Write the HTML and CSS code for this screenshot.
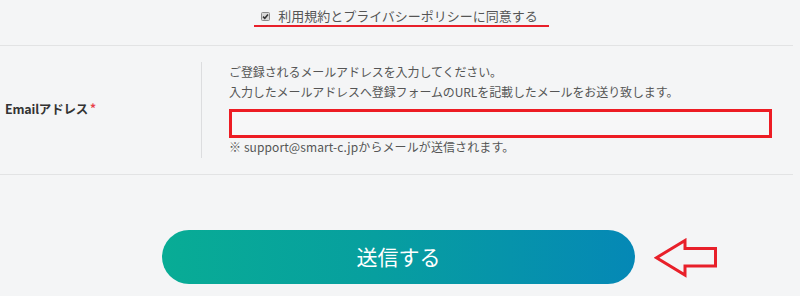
FILE: index.html
```html
<!DOCTYPE html>
<html lang="ja">
<head>
<meta charset="utf-8">
<title>Email登録</title>
<link rel="stylesheet" href="styles.css">
</head>
<body>
<div class="page">
  <div class="agree">
    <label class="agree-label">
      <span class="check"><svg width="9" height="9" viewBox="0 0 9 9"><rect x="0.5" y="0.5" width="8" height="8" rx="1" fill="#d9d9d9" stroke="#8a8a8a"/><path d="M2 4.6 L3.8 6.3 L7 2.6" fill="none" stroke="#333" stroke-width="1.5"/></svg></span>
      <span class="agree-text">利用規約とプライバシーポリシーに同意する</span>
    </label>
  </div>
  <div class="row">
    <div class="row-label">Emailアドレス<span class="req">*</span></div>
    <div class="row-body">
      <p class="desc">ご登録されるメールアドレスを入力してください。<br>入力したメールアドレスへ登録フォームのURLを記載したメールをお送り致します。</p>
      <div class="input"></div>
      <p class="note">※ support@smart-c.jpからメールが送信されます。</p>
    </div>
  </div>
  <div class="actions">
    <button class="submit" type="button">送信する</button>
    <svg class="arrow" width="64" height="40" viewBox="0 0 64 40"><path d="M2.5 19.7 L31 2.5 L31 10.5 L61.5 10.5 L61.5 28 L31 28 L31 37 Z" fill="none" stroke="#e8202a" stroke-width="3" stroke-linejoin="miter"/></svg>
  </div>
</div>
</body>
</html>
```

FILE: styles.css
```css
html, body {
  margin: 0;
  padding: 0;
}
body {
  background: #f4f5f6;
  font-family: "Noto Sans CJK JP", "Open Sans", sans-serif;
  color: #555;
  width: 800px;
  height: 296px;
  overflow: hidden;
}
.page {
  width: 793px;
}
.agree {
  height: 45px;
  box-sizing: border-box;
  padding-top: 7px;
  display: flex;
  justify-content: center;
  padding-left: 10px;
}
.agree-label {
  display: inline-flex;
  align-items: center;
  border-bottom: 2px solid #e8202a;
  padding: 0 11px 0 7px;
  height: 18px;
  font-size: 13px;
  line-height: 18px;
  color: #555;
}
.check {
  display: flex;
  width: 9px;
  height: 9px;
  margin-right: 8px;
}
.row {
  display: grid;
  grid-template-columns: 201px 1fr;
  border-top: 1px solid #e2e3e4;
  border-bottom: 1px solid #e2e3e4;
  padding: 16px 0;
}
.row-label {
  display: flex;
  align-items: center;
  padding-left: 5px;
  padding-bottom: 4px;
  font-size: 12.5px;
  font-weight: bold;
  color: #333;
  letter-spacing: -0.2px;
}
.req {
  color: #e8404a;
  margin-left: 2px;
  font-size: 12px;
  align-self: flex-start;
  margin-top: 37px;
}
.row-body {
  border-left: 1px solid #dcdddf;
  padding: 0 0 3px 27px;
}
.desc {
  margin: 0;
  font-size: 12px;
  letter-spacing: -0.1px;
  line-height: 20px;
}
.input {
  margin-top: 7px;
  width: 543px;
  height: 29px;
  box-sizing: border-box;
  border: 3px solid #ed1c24;
  background: #f7f7f8;
}
.note {
  margin: 0;
  font-size: 12px;
  letter-spacing: 0.1px;
  line-height: 17px;
}
.actions {
  display: flex;
  align-items: center;
  padding: 55px 0 0 162px;
}
.submit {
  width: 473px;
  height: 54px;
  border: none;
  border-radius: 27px;
  background: linear-gradient(90deg, #08ac95 0%, #079f9f 45%, #0588b6 100%);
  color: #fff;
  font-family: "Noto Sans CJK JP", sans-serif;
  font-size: 21px;
  padding: 0 0 2px 0;
  margin: 0;
}
.arrow {
  margin-left: 19px;
  margin-top: 2px;
}
```
